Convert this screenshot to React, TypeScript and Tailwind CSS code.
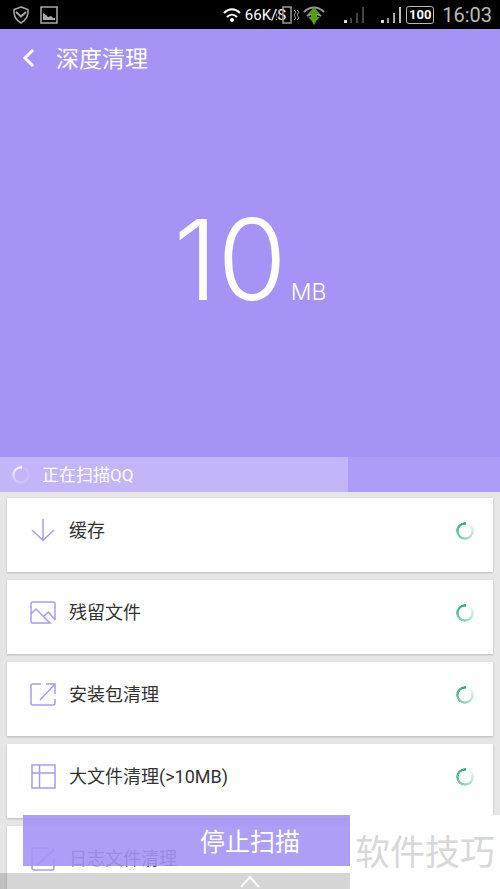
import type { ReactNode } from "react";
import clsx from "clsx";

type CleanItem = {
  id: string;
  label: string;
  icon: ReactNode;
};

const items: CleanItem[] = [
  {
    id: "cache",
    label: "缓存",
    icon: <path d="M14 2v21M3 13l11 10.500L25 13" />,
  },
  {
    id: "residual",
    label: "残留文件",
    icon: (
      <path d="M26 21V5a2 2 0 0 0-2-2H4a2 2 0 0 0-2 2v17a2 2 0 0 0 2 2h17L7 10l-5 5M14.500 17.500L19.500 13l6.500 8" />
    ),
  },
  {
    id: "apk",
    label: "安装包清理",
    icon: <path d="M12 3H4a2 2 0 0 0-2 2v17a2 2 0 0 0 2 2h20a2 2 0 0 0 2-2v-4M17 3h9v10M26 3L11 19" />,
  },
  {
    id: "large",
    label: "大文件清理(>10MB)",
    icon: <path d="M3 2h23v23H3zM10.500 2v23M3 10h23" />,
  },
  {
    id: "log",
    label: "日志文件清理",
    icon: <path d="M20 3H4a1 1 0 0 0-1 1v19a2 2 0 0 0 2 2h18a2 2 0 0 0 2-2V13M26 4L8 20" />,
  },
];

function Spinner({ light = false }: { light?: boolean }) {
  return (
    <span
      className={clsx(
        "size-[18px] shrink-0 rounded-full [mask:radial-gradient(closest-side,transparent_68%,#000_74%)]",
        light
          ? "bg-[conic-gradient(from_10deg,#ffffff11,#ffffff44_60%,#fff)]"
          : "bg-[conic-gradient(from_10deg,#2fae8400,#2fae8488_50%,#2ba57c)]"
      )}
    />
  );
}

function Signal({ dim = false }: { dim?: boolean }) {
  return (
    <svg viewBox="0 0 22 18" className="h-[18px] w-[22px]">
      <path d="M1 14h3v3H1z" fill="#ddd" />
      <path d="M7 12h2v5H7z" fill={dim ? "#444" : "#999"} />
      <path d="M13 7h2v10h-2z" fill={dim ? "#444" : "#aaa"} />
      <path d="M19 1h2v16h-2z" fill={dim ? "#444" : "#bbb"} />
    </svg>
  );
}

function StatusBar() {
  return (
    <div className="flex h-[29px] shrink-0 items-center bg-black pr-2 pl-3 text-white">
      <svg viewBox="0 0 18 18" className="size-[18px]" fill="none" stroke="#aaa" strokeWidth="1.500">
        <path d="M9 1l7 2.500c.5 6-1.500 10.500-7 13.500C3.500 14 1.500 9.500 2 3.500z" />
        <path d="M4 6l5 4.500L14 6" strokeWidth="2" />
      </svg>
      <svg viewBox="0 0 18 18" className="ml-[10px] size-[18px]" fill="none" stroke="#aaa" strokeWidth="1.500">
        <path d="M1 1h16v16H1z" />
        <path d="M3 14V7l3 2 2 2 3-1 2 2h2v2z" fill="#aaa" stroke="none" />
      </svg>

      <div className="ml-auto flex items-center">
        <svg viewBox="0 0 18 16" className="h-4 w-[18px]" fill="none" stroke="#fff" strokeWidth="2">
          <path d="M1 6c5-5 11-5 16 0M4 10c3-3 7-3 10 0" />
          <circle cx="9" cy="13" r="2" fill="#fff" stroke="none" />
        </svg>
        <span className="ml-1 text-[15px] leading-5">66K/S</span>
        <svg viewBox="0 0 24 18" className="-ml-[10px] h-[18px] w-6" fill="none" stroke="#999">
          <path d="M7 1h8v16H7z" strokeWidth="1.500" />
          <path d="M4 4L2 6l2 3-2 3 2 2M1 4L-1 6l2 3-2 3 2 2M18 4l2 2-2 3 2 3-2 2M21 4l2 2-2 3 2 3-2 2" />
        </svg>
        <svg viewBox="0 0 22 20" className="ml-[3px] h-5 w-[22px]" fill="none" stroke="#999" strokeWidth="2">
          <path d="M1 7c6-6 14-6 20 0M4 11c5-4 9-4 14 0" />
          <path d="M11 2l6 7H5zM5 12h12l-3 3-3 5-3-5z" fill="#5a9c10" stroke="none" />
          <path d="M8 9h6v3H8z" fill="#5a9c10" stroke="none" />
        </svg>
        <span className="ml-[18px] flex gap-[15px]">
          <Signal dim />
          <Signal />
        </span>
        <span className="ml-1 h-[18px] w-7 rounded-[3px] border border-[#bbb] text-center text-[13px] leading-4 font-bold">
          100
        </span>
        <span className="ml-2 text-xl leading-6 text-[#bbb]">16:03</span>
      </div>
    </div>
  );
}

export default function App() {
  return (
    <div className="relative flex h-screen flex-col overflow-hidden bg-[#e6e6e6] font-[Roboto,'Noto_Sans_CJK_SC',sans-serif]">
      <StatusBar />

      <section className="shrink-0 bg-[#a693f5] text-white">
        <header className="flex h-[58px] items-center pl-5">
          <button type="button" aria-label="返回" className="cursor-pointer">
            <svg viewBox="0 0 16 20" className="h-5 w-4" fill="none" stroke="#fff" strokeWidth="3">
              <path d="M13 2L5 10l8 8" />
            </svg>
          </button>
          <h1 className="ml-5 pt-1 text-[23px] leading-8">深度清理</h1>
        </header>
        <div className="flex items-baseline justify-center gap-1 pt-[108px] pb-[134px] font-[Inter,sans-serif] [font-optical-sizing:none]">
          <span className="text-[112px] leading-[128px] font-light [font-optical-sizing:none]">10</span>
          <span className="text-[23px] leading-8 font-light">MB</span>
        </div>
      </section>

      <div className="shrink-0 bg-[#ae9df6]">
        <div className="flex h-[35px] w-[69.6%] items-center bg-[#c4b5f8] pl-3 text-white">
          <Spinner light />
          <p className="ml-3 text-[17px] leading-6">正在扫描QQ</p>
        </div>
      </div>

      <ul className="flex flex-col gap-2 px-[7px] pt-[6px]">
        {items.map((item) => (
          <li key={item.id} className="flex h-[74px] shrink-0 items-center bg-white pr-[19px] pb-[9px] pl-[22px] shadow-[0_1px_2px_#00000033]">
            <svg viewBox="0 0 28 28" className="size-7" fill="none" stroke="#aa9af0" strokeWidth="1.500">
              {item.icon}
            </svg>
            <span className="ml-3 flex-1 text-lg text-[#333]">{item.label}</span>
            <Spinner />
          </li>
        ))}
      </ul>

      {/* floating stop button and pull-up handle over the list */}
      <div className="absolute inset-x-0 bottom-0">
        <div className="px-[23px] pb-[7px]">
          <button type="button" className="h-[51px] w-full cursor-pointer bg-[#a693f5]/90 pt-1 text-[25px] text-white">
            停止扫描
          </button>
        </div>
        <button type="button" aria-label="展开" className="flex h-4 w-full cursor-pointer justify-center bg-black/16">
          <svg viewBox="0 0 20 14" className="h-4 w-5" fill="none" stroke="#fff" strokeWidth="2">
            <path d="M1 13l9-10 9 10" />
          </svg>
        </button>
        <div className="absolute right-0 bottom-0 flex h-[74px] w-[150px] items-center justify-center bg-white pt-1 text-[35px] text-[#d8d8d8]">
          软件技巧
        </div>
      </div>
    </div>
  );
}
